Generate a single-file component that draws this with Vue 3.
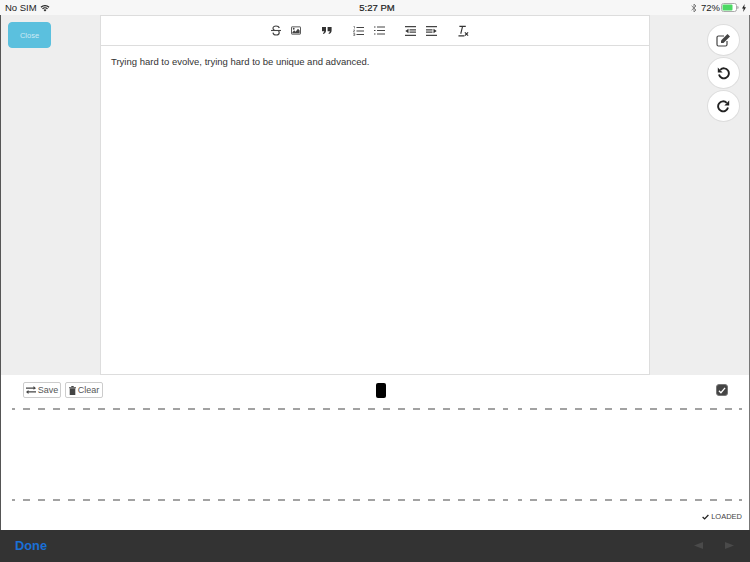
<template>
  <div class="page">
    <div class="status">
      <div class="st-left">
        <span>No SIM</span>
        <svg width="10" height="8" viewBox="0 0 11 9"><path d="M.5 3.200a7 7 0 0 1 10 0l-1 1a5.600 5.600 0 0 0-8 0zM2.200 5a4.600 4.600 0 0 1 6.600 0l-1 1a3.200 3.200 0 0 0-4.600 0zM3.900 6.700a2.200 2.200 0 0 1 3.200 0L5.500 8.400z" fill="#222"/></svg>
      </div>
      <div class="st-time">5:27 PM</div>
      <div class="st-right">
        <svg class="bt" width="6" height="10" viewBox="0 0 6 10"><path d="M.6 2.800 5 7 3 9V1l2 2L.6 7.200" fill="none" stroke="#777" stroke-width=".9"/></svg>
        <span class="pct">72%</span>
        <svg class="bat" width="18" height="9" viewBox="0 0 18 9"><rect x=".5" y=".5" width="15" height="8" rx="2" fill="#fff" stroke="#aaa"/><rect x="1.500" y="1.500" width="10" height="6" rx="1" fill="#4cd964"/><path d="M16.500 3v3a1.500 1.500 0 0 0 1-1.500A1.500 1.500 0 0 0 16.500 3z" fill="#888"/></svg>
        <svg class="bolt" width="4" height="8" viewBox="0 0 4 8"><path d="M2.600 0 0 4.600h1.600L1.200 8 4 3.200H2.300z" fill="#222"/></svg>
      </div>
    </div>

    <div class="main">
      <div class="left"><button class="close">Close</button></div>
      <div class="editor">
        <div class="toolbar">
          <svg class="t1" width="10" height="11" viewBox="0 0 10 11"><path d="M8.300 3C8 1.800 6.700 1 5 1 3.200 1 2 1.900 2 3.200c0 .9.500 1.500 1.400 1.900M2 7.600C2.200 9 3.500 10 5.100 10 6.900 10 8.200 9.100 8.200 7.700 8.200 7 8 6.500 7.500 6" fill="none" stroke="#444" stroke-width="1.200"/><path d="M0 5.500h10" stroke="#444" stroke-width="1.100"/></svg>
          <svg class="t2" width="10" height="9" viewBox="0 0 11 9"><rect x=".5" y=".5" width="10" height="8" rx=".5" fill="#fff" stroke="#444"/><path d="M1.500 7.500V6.300L3.500 4.300 5 5.800 7.700 2.700 9.500 4.500V7.500z" fill="#444"/><circle cx="3" cy="2.600" r="1" fill="#444"/></svg>
          <svg class="t3" width="10" height="7" viewBox="0 0 10 7"><path d="M0 0h4v3.600C4 5.400 3 6.600 1.300 7L.9 6C1.800 5.700 2.200 5.100 2.200 4.200H0zM5.600 0h4v3.600C9.600 5.400 8.600 6.600 6.900 7L6.500 6C7.400 5.700 7.800 5.100 7.800 4.200H5.600z" fill="#333"/></svg>
          <svg class="t4" width="11" height="10" viewBox="0 0 11 10"><path d="M3.500 1.500H11M3.500 5H11M3.500 8.500H11" stroke="#444" stroke-width="1.200"/><path d="M.5 .5h1v2M.3 4h1.500L.3 6h1.600M.3 7.500h1.500v2H.3M.6 8.500h1" fill="none" stroke="#444" stroke-width=".6"/></svg>
          <svg class="t5" width="11" height="9" viewBox="0 0 11 9"><path d="M3 1H11M3 4.500H11M3 8H11" stroke="#444" stroke-width="1.200"/><path d="M0 1h1.500M0 4.500h1.500M0 8h1.500" stroke="#444" stroke-width="1.200"/></svg>
          <svg class="t6" width="11" height="10" viewBox="0 0 11 10"><path d="M0 .7H11M4.500 3.800H11M4.500 6.200H11M0 9.300H11" stroke="#444" stroke-width="1.200"/><path d="M3.500 2.700V7.300L.3 5z" fill="#333"/></svg>
          <svg class="t7" width="11" height="10" viewBox="0 0 11 10"><path d="M0 .7H11M0 3.800H6.500M0 6.200H6.500M0 9.300H11" stroke="#444" stroke-width="1.200"/><path d="M7.500 2.700V7.300L10.700 5z" fill="#333"/></svg>
          <svg class="t8" width="11" height="12" viewBox="0 0 12 12"><path d="M1.500 1H8.500M5 1 3 9M.5 11.300H7" fill="none" stroke="#333" stroke-width="1.200"/><path d="M7.500 7.500 11 11M11 7.500 7.500 11" stroke="#333" stroke-width="1.300"/></svg>
        </div>
        <div class="content">Trying hard to evolve, trying hard to be unique and advanced.</div>
      </div>
      <div class="right">
        <button class="round">
          <svg width="15" height="14" viewBox="0 0 15 14"><path d="M11 8v3.500a1.500 1.500 0 0 1-1.500 1.500h-7A1.500 1.500 0 0 1 1 11.500v-7A1.500 1.500 0 0 1 2.500 3H8" fill="none" stroke="#444" stroke-width="1.200"/><path d="M5 7.500 11.500 1 14 3.500 7.500 10H5z" fill="#444"/></svg>
        </button>
        <button class="round">
          <svg width="13" height="13" viewBox="0 0 13 13"><path d="M3.300 2.800A5 5 0 1 1 2 7.500" fill="none" stroke="#222" stroke-width="1.900"/><path d="M.8 .6V5.400H5.600z" fill="#222"/></svg>
        </button>
        <button class="round">
          <svg width="13" height="13" viewBox="0 0 13 13"><path d="M9.700 2.800A5 5 0 1 0 11 7.500" fill="none" stroke="#222" stroke-width="1.900"/><path d="M12.200 .6V5.400H7.400z" fill="#222"/></svg>
        </button>
      </div>
    </div>

    <div class="panel">
      <div class="tools">
        <div class="btns">
          <button class="btn">
            <svg width="10" height="8" viewBox="0 0 10 8"><path d="M0 1.500h7.500V0L10 2.200 7.500 3.800V2.700H0zM10 5.300H2.500V4L0 6l2.500 2V6.500H10z" fill="#444"/></svg>Save
          </button>
          <button class="btn">
            <svg width="7" height="9" viewBox="0 0 7 9"><path d="M0 1.300h7v1H0zM2.300 0h2.400v1H2.300zM.7 2.600h5.600V9H.7z" fill="#444"/></svg>Clear
          </button>
        </div>
        <div class="swatch"></div>
        <div class="check">
          <svg width="8" height="7" viewBox="0 0 9 8"><path d="M1 4.200 3.300 6.500 8 1" fill="none" stroke="#fff" stroke-width="1.500"/></svg>
        </div>
      </div>
      <div class="dash-row"><span class="dash long"></span><span class="dash tail"></span></div>
      <div class="gap"></div>
      <div class="dash-row"><span class="dash long"></span><span class="dash tail"></span></div>
      <div class="loaded">
        <svg width="7" height="6" viewBox="0 0 8 6"><path d="M.7 3 3 5.200 7.300.8" fill="none" stroke="#222" stroke-width="1.500"/></svg>
        <span>LOADED</span>
      </div>
    </div>

    <div class="bottom">
      <span class="done">Done</span>
      <div class="arrows">
        <svg width="9" height="7" viewBox="0 0 9 7"><path d="M0 3.500 9 0V7z" fill="#4a4a4a"/></svg>
        <svg width="9" height="7" viewBox="0 0 9 7"><path d="M9 3.500 0 0V7z" fill="#4a4a4a"/></svg>
      </div>
    </div>
  </div>
</template>

<script setup>
</script>

<style>
html, body { margin: 0; padding: 0; }
</style>

<style scoped>
.page {
  width: 750px;
  height: 562px;
  display: flex;
  flex-direction: column;
  overflow: hidden;
  font-family: "Liberation Sans", Arial, sans-serif;
  color: #333;
  background: #fff;
}
button { font-family: inherit; margin: 0; padding: 0; cursor: pointer; }
.status {
  height: 15px;
  flex: none;
  background: #f7f7f7;
  display: grid;
  grid-template-columns: 1fr auto 1fr;
  align-items: center;
  padding: 0 4px 0 5px;
  font-size: 9.500px;
  color: #222;
  box-sizing: border-box;
}
.st-left { display: flex; align-items: center; gap: 3px; }
.st-time { margin-left: 3px; -webkit-text-stroke: .2px #222; }
.st-right { display: flex; align-items: center; justify-content: flex-end; }
.bt { margin-right: 4px; }
.pct { margin-right: 1px; }
.bat { margin-right: 3px; }
.main {
  height: 360px;
  flex: none;
  display: flex;
  background: #eee;
  border-left: 1px solid #555;
  border-right: 1px solid #777;
}
.left { width: 99px; flex: none; padding: 7px 0 0 7px; box-sizing: border-box; }
.close {
  width: 43px;
  height: 26px;
  border: 1px solid #5bc0de;
  border-radius: 4px;
  background: #5bc0de;
  color: #cdeaf4;
  font-size: 7.500px;
}
.editor {
  width: 550px;
  flex: none;
  box-sizing: border-box;
  background: #fff;
  border: 1px solid #ddd;
  display: flex;
  flex-direction: column;
}
.toolbar {
  height: 30px;
  flex: none;
  box-sizing: border-box;
  border-bottom: 1px solid #ddd;
  display: flex;
  align-items: center;
  padding-left: 170px;
}
.t2 { margin-left: 10px; }
.t3 { margin-left: 21px; }
.t4 { margin-left: 21px; }
.t5 { margin-left: 10px; }
.t6 { margin-left: 20px; }
.t7 { margin-left: 10px; }
.t8 { margin-left: 21px; }
.content {
  padding: 10px 10px 0 10px;
  font-size: 9.500px;
  line-height: 12px;
  color: #333;
}
.right {
  flex: 1;
  display: flex;
  flex-direction: column;
  align-items: flex-start;
  padding: 9px 0 0 57px;
  gap: 1px;
  box-sizing: border-box;
}
.round {
  width: 33px;
  height: 32px;
  border-radius: 50%;
  background: #fff;
  border: 1px solid #ddd;
  display: flex;
  align-items: center;
  justify-content: center;
}
.panel {
  height: 155px;
  flex: none;
  box-sizing: border-box;
  border-left: 1px solid #555;
  border-right: 1px solid #777;
  padding: 0 7px 0 11px;
  display: flex;
  flex-direction: column;
}
.tools {
  height: 30px;
  flex: none;
  display: flex;
  align-items: center;
  position: relative;
  justify-content: space-between;
  padding: 0 14px 0 11px;
}
.btns { display: flex; gap: 4px; }
.btn {
  width: 38px;
  height: 16px;
  border: 1px solid #ccc;
  border-radius: 2px;
  background: #fff;
  font-size: 9px;
  color: #555;
  display: flex;
  align-items: center;
  justify-content: center;
  gap: 2px;
}
.swatch {
  position: absolute;
  left: 364px;
  top: 8px;
  width: 10px;
  height: 15px;
  background: #000;
  border-radius: 2px;
}
.check {
  width: 12px;
  height: 12px;
  box-sizing: border-box;
  border-radius: 3px;
  background: #444;
  border: 1px solid #777;
  display: flex;
  align-items: center;
  justify-content: center;
}
.dash-row { height: 2px; flex: none; margin-top: 3px; display: flex; }
.dash {
  height: 2px;
  background: repeating-linear-gradient(to right, #a2a2a2 0 7px, transparent 7px 15px);
}
.long { width: 496px; background-position-x: -4px; }
.tail { flex: 1; margin-left: 10px; background-position-x: -3px; }
.gap { height: 86px; flex: none; }
.loaded {
  margin-top: 11px;
  display: flex;
  justify-content: flex-end;
  align-items: center;
  gap: 2px;
  font-size: 7.500px;
  color: #444;
}
.bottom {
  flex: 1;
  background: #333;
  display: flex;
  align-items: center;
  justify-content: space-between;
  padding: 0 16px 1px 15px;
}
.done { color: #1a6fd6; font-size: 12.800px; font-weight: 700; }
.arrows { display: flex; gap: 22px; }
</style>
